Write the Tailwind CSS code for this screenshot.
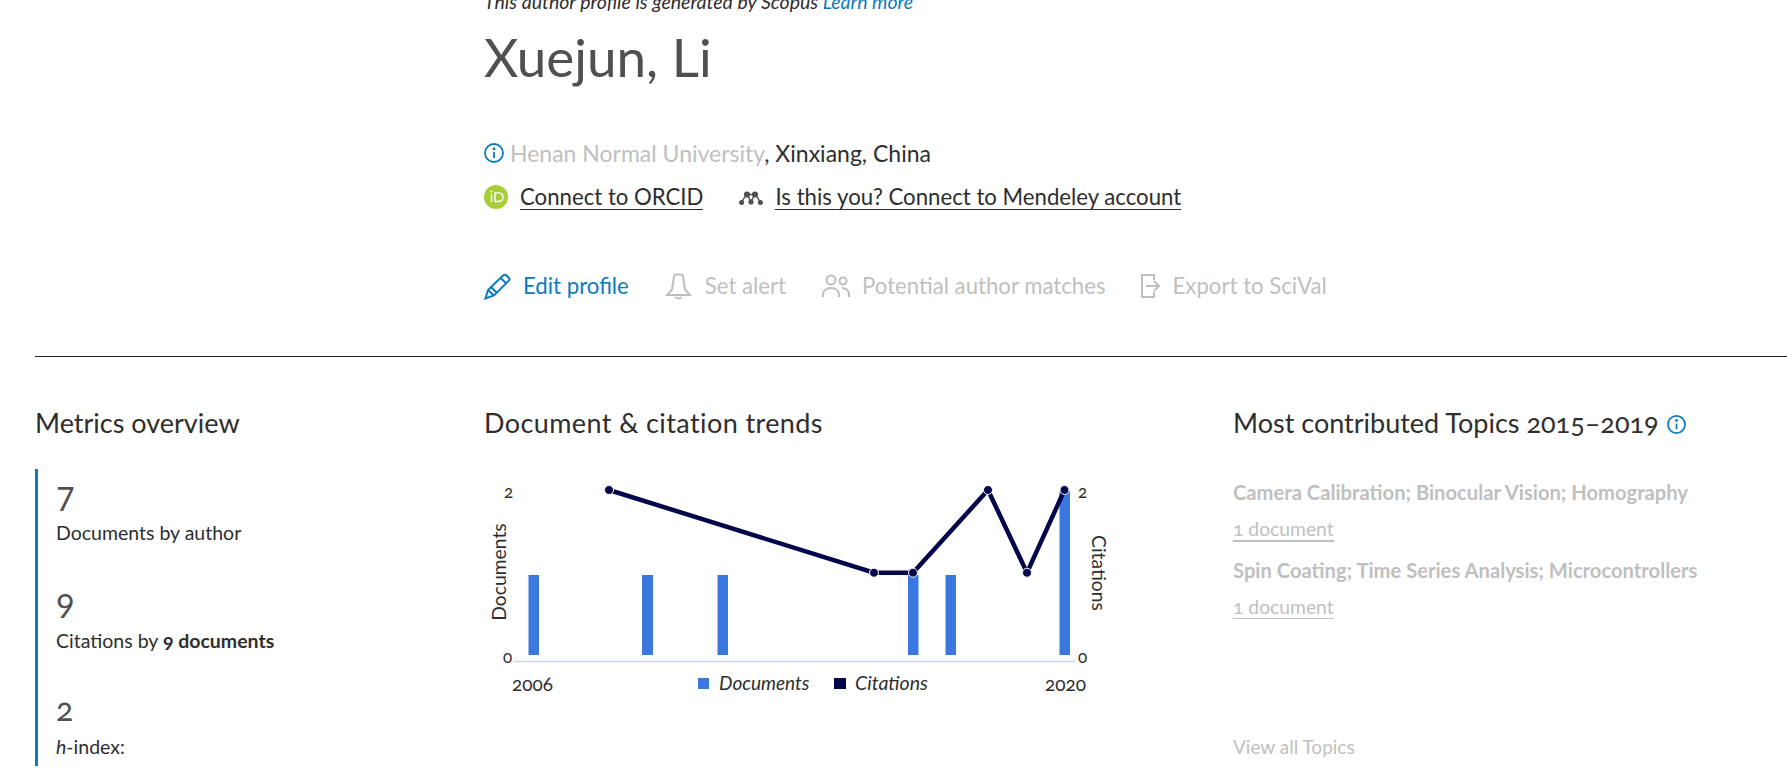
<!DOCTYPE html>
<html lang="en">
<head>
    <meta charset="UTF-8">
    <meta name="viewport" content="width=device-width, initial-scale=1.0">
    <title>Xuejun, Li - Scopus</title>
    <script src="https://cdn.jsdelivr.net/npm/@tailwindcss/browser@4"></script>
</head>
<body class="bg-white overflow-hidden h-[773px] font-['Lato',sans-serif] text-[#2e2e2e] oldstyle-nums">

    <!-- Author header -->
    <header class="pl-[484px] h-[364px]">
        <p class="-mt-[8px] h-[20px] text-[19.5px] leading-[20px] italic">This author profile is generated by Scopus <a class="text-[#0b7bbd]">Learn more</a></p>
        <h1 class="mt-[15px] text-[53px] leading-[60px] text-[#505050]">Xuejun, Li</h1>

        <div class="mt-[52px] flex items-center gap-[6px] h-[28px] text-[23px] leading-[28px]">
            <svg class="w-[20px] h-[20px]" viewBox="0 0 20 20" fill="none" stroke="#0b7bbd" stroke-width="1.800"><circle cx="10" cy="10" r="9"/><path d="M10 9v6"/><circle cx="10" cy="5.800" r="0.600"/></svg>
            <p><span class="text-[#bfbfbf]">Henan Normal University</span>, Xinxiang, China</p>
        </div>

        <div class="mt-[16px] flex items-center h-[28px] text-[22.2px] leading-[28px]">
            <svg class="w-[24px] h-[24px]" viewBox="0 0 24 24"><circle cx="12" cy="12" r="12" fill="#a6ce39"/><path d="M7.500 9.200v7.800" stroke="#fff" stroke-width="1.500"/><circle cx="7.500" cy="6.400" r="1" fill="#fff"/><path d="M11 7.900h3.200c3 0 4.800 1.900 4.800 4.300s-1.800 4.300-4.800 4.300H11z" fill="none" stroke="#fff" stroke-width="1.400"/></svg>
            <a class="ml-[12px] border-b border-[#2e2e2e] leading-[25px]">Connect to ORCID</a>
            <svg class="ml-[36px] w-[24px] h-[24px]" viewBox="0 0 24 24" fill="#505050"><circle cx="2.600" cy="17.500" r="2.500"/><circle cx="21.400" cy="17.500" r="2.500"/><circle cx="12" cy="17" r="2.600"/><circle cx="8" cy="9.500" r="3.100"/><circle cx="16" cy="9.500" r="3.100"/><path d="M2.600 17.500 6 11.500M21.400 17.500 18 11.500M9.500 12 12 16.500 14.500 12M8 9.500h8" fill="none" stroke="#505050" stroke-width="1.500"/></svg>
            <a class="ml-[12px] border-b border-[#2e2e2e] leading-[25px]">Is this you? Connect to Mendeley account</a>
        </div>

        <nav class="mt-[59px] flex items-center h-[32px] text-[22.2px] leading-[32px] text-[#bfbfbf]">
            <svg class="w-[27px] h-[27px]" viewBox="0 0 27 27" fill="none" stroke="#0b7bbd" stroke-width="2"><path d="M1.500 25.500 4 17 19 2.500c1.200-1 2.600-1 3.600 0l2 2c1 1 1 2.400 0 3.400L10 22.500z"/><path d="M4 17l6 5.500M7 14l6 6M16.500 5l6 5.500"/></svg>
            <a class="ml-[12px] text-[#0b7bbd]">Edit profile</a>
            <svg class="ml-[36px] w-[27px] h-[27px]" viewBox="0 0 27 27" fill="none" stroke="#bfbfbf" stroke-width="2"><path d="M9 3.500c0-1 .8-2 2-2h5c1.200 0 2 1 2 2l2 13 5 5.500H2l5-5.500zM10.500 24c1 2 5 2 6 0"/></svg>
            <a class="ml-[13px]">Set alert</a>
            <svg class="ml-[36px] w-[28px] h-[27px]" viewBox="0 0 28 27" fill="none" stroke="#bfbfbf" stroke-width="2"><circle cx="9" cy="7" r="4.500"/><circle cx="21" cy="8" r="3.500"/><path d="M1 24v-2c0-4 3-7 8-7s8 3 8 7v2M20 15c4 0 7 2.500 7 7v2"/></svg>
            <a class="ml-[12px]">Potential author matches</a>
            <svg class="ml-[35px] w-[20px] h-[27px]" viewBox="0 0 20 27" fill="none" stroke="#bfbfbf" stroke-width="2"><path d="M13 7V2H1v22h12v-5M5 13h13M13 8l5 5-5 5"/></svg>
            <a class="ml-[12px]">Export to SciVal</a>
        </nav>
    </header>

    <hr class="ml-[35px] border-t border-[#222]">

    <!-- Overview columns -->
    <main class="mt-[48px] pl-[35px] grid grid-cols-[449px_749px_1fr]">
        <section>
            <h2 class="text-[27px] leading-[36px]">Metrics overview</h2>
            <div class="mt-[28px] h-[297px] border-l-[3px] border-[#0b7bbd] pl-[18px] overflow-hidden text-[19.5px]">
                <p class="mt-[10px] text-[32px] leading-[40px] text-[#505050] lining-nums">7</p>
                <p class="mt-[2px] leading-[24px]">Documents by author</p>
                <p class="mt-[41px] text-[32px] leading-[40px] text-[#505050] lining-nums">9</p>
                <p class="mt-[3px] leading-[24px]">Citations by <b class="font-bold">9 documents</b></p>
                <p class="mt-[36px] text-[32px] leading-[40px] text-[#505050]">2</p>
                <p class="mt-[6px] leading-[24px]"><i>h</i>-index:</p>
            </div>
        </section>

        <section>
            <h2 class="text-[27px] leading-[36px] tracking-[0.4px]">Document &amp; citation trends</h2>
            <svg class="mt-[28px] -ml-[9px] block" width="640" height="240" viewBox="475 469 640 240" font-size="17" fill="#2e2e2e">
                <rect x="528.500" y="575" width="10.500" height="80" fill="#3a78e0"/>
                <rect x="642" y="575" width="11" height="80" fill="#3a78e0"/>
                <rect x="717.500" y="575" width="10.500" height="80" fill="#3a78e0"/>
                <rect x="908" y="575" width="10.500" height="80" fill="#3a78e0"/>
                <rect x="945.500" y="575" width="10.500" height="80" fill="#3a78e0"/>
                <rect x="1059.500" y="491" width="10.500" height="164" fill="#3a78e0"/>
                <path d="M513.500 661.500H1075" stroke="#ccd8f0" stroke-width="1.500"/>
                <path d="M609 490 874 572.700H913L988 490 1027 572.700 1064.500 490" fill="none" stroke="#03064b" stroke-width="4.500"/>
                <g fill="#03064b" stroke="#fff" stroke-width="1">
                    <circle cx="609" cy="490" r="4.500"/>
                    <circle cx="874" cy="572.700" r="4.500"/>
                    <circle cx="913" cy="572.700" r="4.500"/>
                    <circle cx="988" cy="490" r="4.500"/>
                    <circle cx="1027" cy="572.700" r="4.500"/>
                    <circle cx="1064.500" cy="490" r="4.500"/>
                </g>
                <text x="504" y="498">2</text>
                <text x="503" y="663">0</text>
                <text x="1078" y="498">2</text>
                <text x="1078" y="663">0</text>
                <text transform="translate(506 572) rotate(-90)" text-anchor="middle" font-size="19.300">Documents</text>
                <text transform="translate(1092 573) rotate(90)" text-anchor="middle" font-size="19.300">Citations</text>
                <text x="512" y="691" font-size="19">2006</text>
                <text x="1045" y="691" font-size="19">2020</text>
                <rect x="698" y="678" width="11" height="11" fill="#3a78e0"/>
                <text x="719" y="690" font-size="19" font-style="italic">Documents</text>
                <rect x="834" y="678" width="12" height="11" fill="#03064b"/>
                <text x="855" y="690" font-size="19.500" font-style="italic">Citations</text>
            </svg>
        </section>

        <section>
            <h2 class="flex items-center gap-[8px] text-[27px] leading-[36px]">Most contributed Topics 2015–2019
                <svg class="mt-[3px] w-[19px] h-[19px]" viewBox="0 0 20 20" fill="none" stroke="#0b7bbd" stroke-width="1.800"><circle cx="10" cy="10" r="9"/><path d="M10 9v6"/><circle cx="10" cy="5.800" r="0.600"/></svg>
            </h2>
            <div class="mt-[39px] text-[19.300px] leading-[24px] text-[#bfbfbf]">
                <p class="text-[20.200px] font-bold">Camera Calibration; Binocular Vision; Homography</p>
                <a class="mt-[14px] block w-fit border-b-2 border-[#bfbfbf] leading-[22px]">1 document</a>
                <p class="mt-[16px] text-[20.200px] font-bold">Spin Coating; Time Series Analysis; Microcontrollers</p>
                <a class="mt-[14px] block w-fit border-b border-[#bfbfbf] leading-[22px]">1 document</a>
                <p class="mt-[116px] text-[19px]">View all Topics</p>
            </div>
        </section>
    </main>

</body>
</html>
